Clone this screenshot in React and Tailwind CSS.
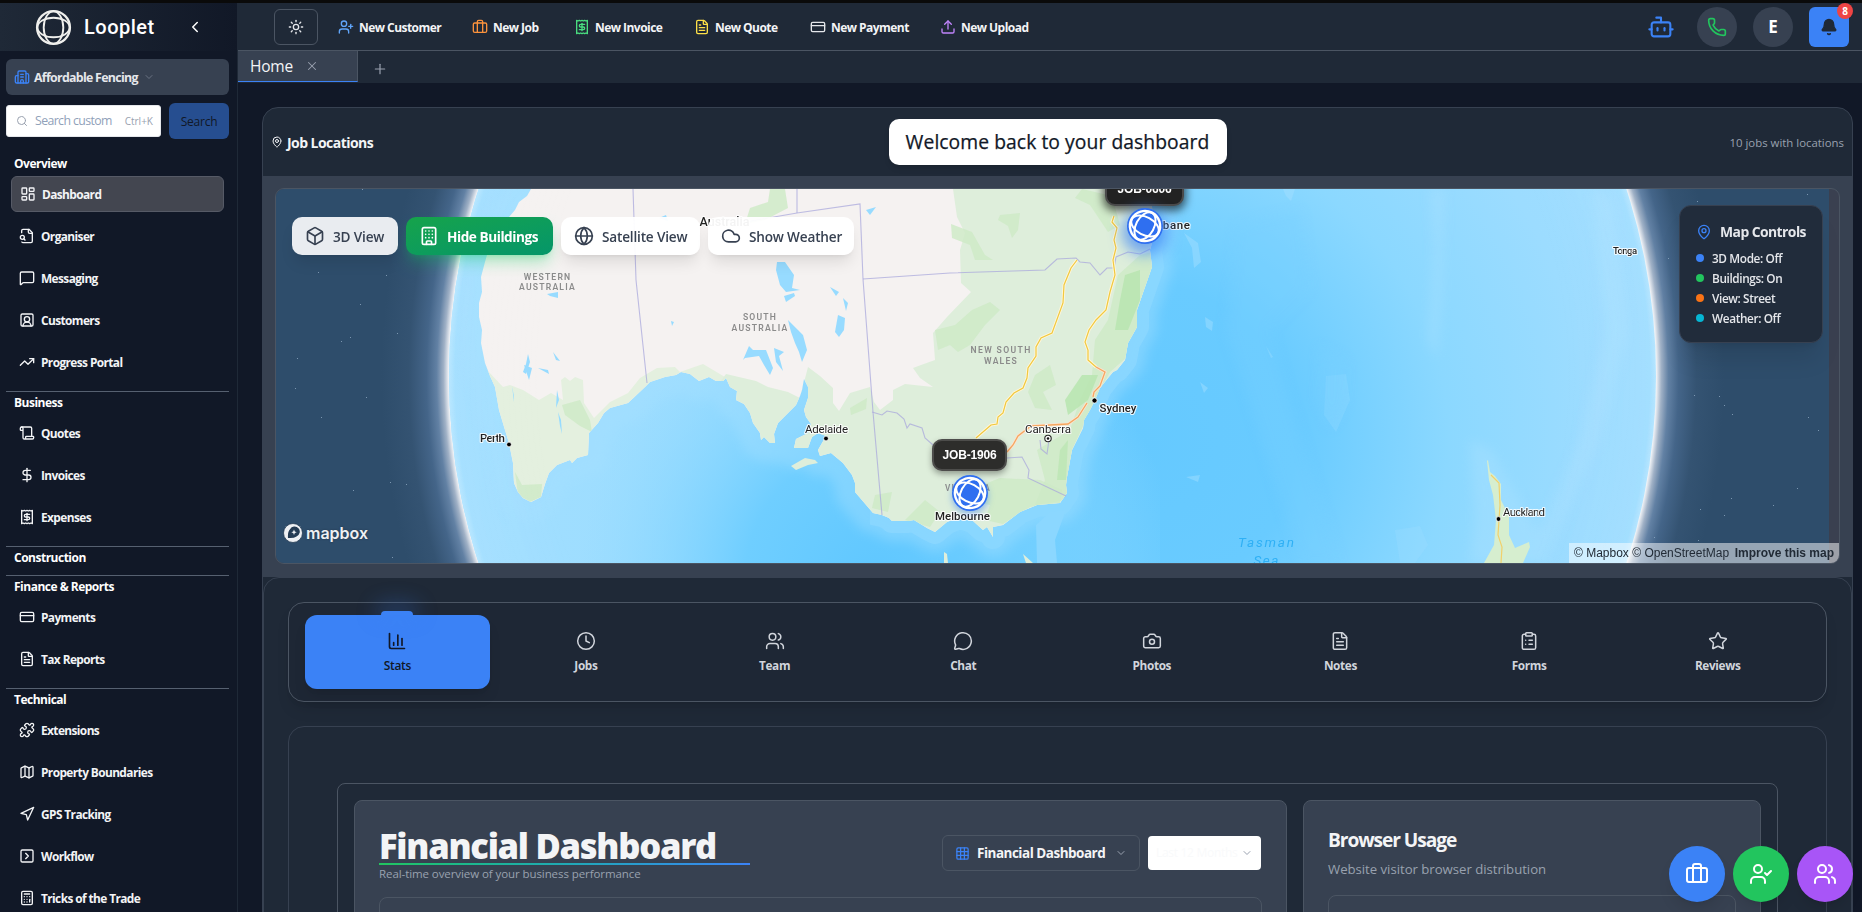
import React from "react";
import {
  LayoutDashboard, MessageSquare, SquareUserRound, TrendingUp, Scroll, DollarSign, Receipt,
  CreditCard, FileText, Puzzle, Map, Navigation, SquareChevronRight, Calculator, Sun, UserPlus, Briefcase,
  Upload, Bot, Phone, Bell, Building2, Building, MapPin, Box, Globe, Cloud, Clock, Users, MessageCircle,
  Camera, ClipboardList, Star, UserCheck, Grid3x3, ChevronLeft, ChevronDown, Search, X, Plus, ChartColumn,
} from "lucide-react";

function LoopMark({ className, stroke = 2.4 }) {
  return (
    <svg viewBox="0 0 40 40" className={className} fill="none" stroke="currentColor" strokeWidth={stroke}>
      <circle cx="20" cy="20" r="17.8" />
      <ellipse cx="20" cy="20" rx="17.4" ry="10.6" strokeWidth={stroke * 0.85} />
      <ellipse cx="20" cy="20" rx="10.6" ry="17.4" strokeWidth={stroke * 0.85} />
    </svg>
  );
}

function FileLookup({ className }) {
  return (
    <svg viewBox="0 0 24 24" className={className} fill="none" stroke="currentColor" strokeWidth="2" strokeLinecap="round" strokeLinejoin="round">
      <path d="M14 2v4a2 2 0 0 0 2 2h4" />
      <path d="M4.268 21a2 2 0 0 0 1.727 1H18a2 2 0 0 0 2-2V7l-5-5H6a2 2 0 0 0-2 2v3" />
      <path d="m9 18-1.500-1.500" />
      <circle cx="5" cy="14" r="3" />
    </svg>
  );
}

const sections = [
  {
    title: "Overview",
    items: [
      [LayoutDashboard, "Dashboard"],
      [FileLookup, "Organiser"],
      [MessageSquare, "Messaging"],
      [SquareUserRound, "Customers"],
      [TrendingUp, "Progress Portal"],
    ],
  },
  { title: "Business", items: [[Scroll, "Quotes"], [DollarSign, "Invoices"], [Receipt, "Expenses"]] },
  { title: "Construction", items: [] },
  { title: "Finance & Reports", items: [[CreditCard, "Payments"], [FileText, "Tax Reports"]] },
  {
    title: "Technical",
    items: [
      [Puzzle, "Extensions"],
      [Map, "Property Boundaries"],
      [Navigation, "GPS Tracking"],
      [SquareChevronRight, "Workflow"],
      [Calculator, "Tricks of the Trade"],
    ],
  },
];

function Sidebar() {
  return (
    <aside className="flex w-[238px] shrink-0 flex-col overflow-hidden border-r border-[#1f2937] bg-[#111827]">
      <div className="flex h-12 shrink-0 items-center bg-gradient-to-r from-[#1f2937] to-[#111827] pl-[35px] text-white">
        <LoopMark className="size-[37px] text-[#efefec]" />
        <span className="ml-[12px] w-[72px] font-['Roboto',sans-serif] text-[20px] font-medium tracking-[0.5px]">Looplet</span>
        <ChevronLeft className="ml-[30px] size-[18px]" />
      </div>
      <div className="mx-[6px] mt-2 flex h-9 w-[223px] shrink-0 items-center rounded-md bg-[#374151] pl-2">
        <Building2 className="size-4 text-[#3b82f6]" />
        <span className="ml-1 pt-[2px] text-[12.400px] font-bold tracking-[-0.710px] text-gray-200">Affordable Fencing</span>
        <ChevronDown className="ml-[5px] size-[12px] text-gray-500" />
      </div>
      <div className="mx-[6px] mt-2 flex h-9 w-[223px] shrink-0 items-center gap-2">
        <div className="flex h-8 w-[155px] items-center rounded-[3px] border border-gray-200 bg-white pl-[9px] pr-[7px]">
          <Search className="size-3 text-gray-400" />
          <span className="ml-[7px] flex-1 whitespace-nowrap pt-px text-[12.300px] tracking-[-0.600px] text-slate-400">Search custom</span>
          <span className="text-[10px] text-gray-400">Ctrl+K</span>
        </div>
        <div className="flex h-9 w-[60px] items-center justify-center rounded-md bg-[#264e90] pt-px text-[12px] tracking-[-0.250px] text-[#111827]">Search</div>
      </div>
      <nav className="mt-[13px] flex flex-col">
        {sections.map((s, i) => (
          <div key={s.title} className="flex flex-col">
            {i > 0 && <div className="ml-[6px] h-px w-[223px] shrink-0 bg-[#566070]" />}
            <div className={"flex items-center pl-[14px] text-[12px] font-bold tracking-[-0.500px] text-white " + (i === 0 ? "h-6" : s.items.length ? "h-[23px] pb-px" : "mb-[5px] h-[23px] pb-px")}>{s.title}</div>
            {s.items.length > 0 && (
              <div className="mb-[11px] ml-[11px] flex w-[213px] flex-col gap-[6px]">
                {s.items.map(([Icon, label], j) => (
                  <div
                    key={label}
                    className={
                      "flex h-9 items-center gap-[6px] rounded-md border pl-2 text-[11.900px] font-bold tracking-[-0.600px] text-gray-100 " +
                      (i === 0 && j === 0 ? "border-[#565a66] bg-[#434650]" : "-ml-px border-transparent")
                    }
                  >
                    <Icon className="size-4" strokeWidth={2} />
                    <span className="whitespace-nowrap pt-[2px]">{label}</span>
                  </div>
                ))}
              </div>
            )}
          </div>
        ))}
      </nav>
    </aside>
  );
}

function TopBar() {
  const actions = [
    [UserPlus, "New Customer", "text-[#60a5fa]", "w-[134px]"],
    [Briefcase, "New Job", "text-[#fb923c]", "w-[102px]"],
    [Receipt, "New Invoice", "text-[#4ade80]", "w-[120px]"],
    [FileText, "New Quote", "text-[#fde047]", "w-[116px]"],
    [CreditCard, "New Payment", "text-gray-200", "w-[130px]"],
    [Upload, "New Upload", "text-[#c084fc]", "w-[120px]"],
  ];
  return (
    <header className="flex h-12 shrink-0 items-center border-b border-[#4b5563] bg-[#1f2937] pr-[13px] pt-px">
      <div className="ml-9 flex h-9 w-11 items-center justify-center rounded-md border border-[#4b5563]">
        <Sun className="size-4 text-gray-200" />
      </div>
      <div className="ml-5 flex flex-1">
        {actions.map(([Icon, label, color, width]) => (
          <div key={label} className={"flex items-center gap-[5px] " + width}>
            <Icon className={"size-4 " + color} />
            <span className="whitespace-nowrap pt-px text-[12px] font-bold tracking-[-0.540px] text-gray-100">{label}</span>
          </div>
        ))}
      </div>
      <Bot className="size-7 text-[#3b82f6]" strokeWidth={1.8} />
      <div className="ml-[22px] flex size-10 items-center justify-center rounded-full bg-[#374151]">
        <Phone className="size-5 text-[#22c55e]" />
      </div>
      <div className="ml-4 flex size-10 items-center justify-center rounded-full bg-[#374151] text-[17px] font-bold text-white">E</div>
      <div className="relative ml-4 flex size-10 items-center justify-center rounded-md bg-[#3b82f6]">
        <Bell className="size-[18px] text-[#1f2937]" fill="currentColor" />
        <span className="absolute -right-1 -top-1 flex size-4 items-center justify-center rounded-full bg-[#ef4444] text-[10px] font-bold text-white">8</span>
      </div>
    </header>
  );
}

function TabStrip() {
  return (
    <div className="flex h-8 shrink-0 items-start bg-[#1f2937]">
      <div className="flex h-[31px] w-[120px] items-center border-b border-r border-b-[#3b82f6] border-r-[#4b5563] bg-[#374151] pl-3">
        <span className="pt-px text-[15.500px] tracking-[-0.200px] text-gray-100">Home</span>
        <X className="ml-[12px] size-[14px] text-gray-400" strokeWidth={1.8} />
      </div>
      <Plus className="ml-[14px] mt-[10px] size-4 text-gray-400" strokeWidth={1.8} />
    </div>
  );
}

const land =
  "M531 189 L527 196 L519 202 L515 210 L509 217 L500 233 L489 248 L485 262 L481 277 L482 292 L479 303 L479 317 L482 330 L481 343 L485 363 L490 376 L495 387 L499 410 L505 430 L509 443 L513 463 L514 483 L518 492 L523 498 L531 502 L541 497 L545 484 L549 473 L557 465 L570 460 L572 463 L577 458 L588 455 L589 433 L598 423 L604 413 L610 408 L628 403 L645 387 L650 382 L665 377 L676 375 L681 372 L690 374 L699 381 L709 377 L716 381 L723 381 L726 378 L730 387 L737 391 L736 400 L744 404 L750 413 L753 423 L760 433 L761 440 L764 437 L770 443 L775 443 L774 434 L778 423 L790 411 L796 405 L800 396 L802 390 L804 379 L808 387 L808 398 L804 410 L806 417 L811 424 L808 433 L796 439 L794 448 L808 448 L812 437 L818 433 L826 436 L818 450 L820 456 L831 453 L843 463 L852 475 L855 483 L855 492 L873 513 L882 515 L889 518 L892 521 L908 521 L914 520 L927 528 L935 532 L947 522 L960 517 L973 521 L983 530 L987 527 L993 537 L993 527 L1003 525 L1020 512 L1037 505 L1060 503 L1067 493 L1066 485 L1067 477 L1072 450 L1083 428 L1084 420 L1090 410 L1095 400 L1100 388 L1108 378 L1113 372 L1117 370 L1125 360 L1128 343 L1137 327 L1137 310 L1145 287 L1152 267 L1150 250 L1155 233 L1152 207 L1150 189 Z";
const eastGreen =
  "M953 189 L957 217 L965 233 L960 250 L961 283 L971 292 L947 317 L933 333 L935 360 L921 365 L913 368 L920 378 L933 387 L905 384 L893 390 L893 400 L880 410 L874 402 L870 387 L850 393 L839 411 L833 403 L833 388 L820 376 L808 367 L800 398 L788 392 L768 387 L756 381 L726 374 L720 382 L734 400 L755 440 L770 450 L790 450 L850 500 L880 530 L1000 545 L1080 510 L1170 260 L1160 180 Z";
const wildGreen = "M481 353 L487 370 L503 387 L510 385 L523 390 L539 400 L551 393 L563 400 L561 380 L565 377 L570 381 L575 377 L583 380 L584 403 L594 418 L610 402 L628 393 L640 378 L657 368 L675 367 L680 372 L703 364 L725 377 L726 390 L680 380 L640 395 L590 460 L530 510 L500 480 L475 360Z";

const forests = [
  "M1118 275 L1140 255 L1160 250 L1150 290 L1135 350 L1110 372 L1095 400 L1072 450 L1066 500 L1035 505 L1045 480 L1037 450 L1070 430 L1080 400 L1092 375 L1095 340 L1108 320Z",
  "M1000 215 L1020 213 L1018 230 L1012 238 L1008 226 L998 220Z",
  "M972 310 L990 302 L1000 310 L985 325 L970 345 L958 352 L950 345 L938 350 L935 330 L955 325Z",
  "M951 224 L972 232 L985 255 L993 260 L975 260 L970 245 L952 238Z",
  "M970 490 L1000 478 L1040 480 L1062 490 L1060 503 L1030 507 L1003 524 L985 520 L990 505 L975 502Z",
  "M1035 375 L1050 365 L1056 385 L1043 392 L1052 410 L1035 408 L1028 392Z",
  "M905 520 L925 500 L940 512 L930 527Z",
  "M850 408 L867 398 L866 409 L851 415Z",
  "M875 495 L892 492 L888 512 L872 508Z",
  "M515 472 L522 485 L542 484 L541 497 L530 502 L518 495Z",
  "M562 405 L580 400 L590 420 L592 432 L580 426 L565 415Z",
  "M770 189 L785 189 L788 208 L765 220 L745 224 L750 208 L768 202Z",
  "M1082 189 L1112 196 L1120 225 L1108 232 L1090 205 L1075 198Z",
];

const lakes = [
  "M777 262 L785 262 L794 275 L792 288 L800 290 L786 292 L780 285 L776 270Z",
  "M784 296 L794 293 L795 296 L786 302Z",
  "M788 320 L798 330 L803 335 L807 350 L802 362 L799 352 L795 343 L791 332Z",
  "M749 346 L753 350 L766 350 L773 368 L770 375 L764 365 L759 356 L745 358 L743 360Z",
  "M774 348 L784 352 L779 356 L783 371 L776 362Z",
  "M838 315 L845 318 L844 330 L839 337 L835 332Z",
  "M843 298 L848 303 L846 311Z",
  "M830 287 L839 292 L836 296Z",
  "M866 210 L876 207 L870 215Z",
  "M659 218 L666 215 L668 221Z",
  "M671 321 L674 322 L672 326Z",
  "M547 294 L558 292 L558 298 L550 296Z",
  "M553 352 L560 361 L556 360Z",
  "M524 365 L532 368 L529 380Z",
  "M523 372 L526 364 L528 354 L530 362 L526 374Z",
  "M538 368 L548 370 L549 374Z",
  "M557 390 L559 400 L556 408Z",
  "M558 412 L561 420 L562 434 L560 426Z",
  "M512 386 L514 396 L514 402Z",
];

const roads = [
  "M1077 260 L1071 268 L1064 285 L1063 303 L1052 333 L1041 338 L1036 347 L1036 356 L1028 368 L1027 378 L1023 388 L1014 393 L1006 402 L1003 413 L998 417 L997 424 L991 425 L976 438",
  "M1114 216 L1112 222 L1117 228 L1114 240 L1116 248 L1113 260 L1115 275 L1110 292 L1106 310 L1096 320 L1089 330 L1085 342 L1088 350 L1088 360 L1096 367",
];
const hotRoads = ["M1096 367 L1105 372 L1100 386 L1094 392 L1093 397", "M1087 403 L1078 417 L1068 424 L1050 425 L1031 426 L1018 436 L1013 445 L1007 452"];
const borders = [
  "M633 189 L636 280 L647 383",
  "M797 189 L797 213",
  "M745 222 L797 213 L860 204 L863 279 L873 412 L882 515",
  "M863 279 L950 273 L1045 270 L1057 259 L1076 258 L1080 262 L1090 263 L1100 275 L1107 268 L1114 268 L1116 257 L1128 252 L1140 254 L1150 249",
  "M872 412 L882 415 L887 411 L897 413 L904 419 L907 428 L910 424 L922 428 L925 438 L933 445",
  "M1007 458 L1022 457 L1029 470 L1028 478 L1066 496",
  "M1040 440 L1041 449 L1047 454 L1049 440",
];
const northIsland = "M1488 460 L1490 472 L1495 476 L1501 484 L1501 500 L1506 510 L1509 516 L1509 535 L1515 548 L1529 542 L1530 547 L1523 563 L1484 563 L1494 545 L1496 520 L1493 495 L1489 480 L1487 461Z";
const stars = [
  [362, 189], [385, 249], [318, 272], [297, 358], [350, 337], [360, 304], [397, 333], [341, 341],
  [366, 397], [321, 417], [295, 388], [390, 482], [406, 484], [392, 557], [353, 490], [386, 275],
  [1697, 201], [1807, 194], [1668, 258], [1719, 396], [1694, 395], [1732, 414], [1724, 405],
  [1808, 417], [1797, 488], [1731, 498], [1700, 509], [1724, 515], [1698, 540], [1718, 552], [1818, 430], [1773, 505], [1654, 537],
];

function MapArt() {
  const halo = { paintOrder: "stroke", stroke: "rgba(255,255,255,0.85)", strokeWidth: 2.2, strokeLinejoin: "round" };
  return (
    <svg viewBox="276 189 1553 374" className="h-[374px] w-[1553px] shrink-0 font-['Roboto',sans-serif]">
      <defs>
        <radialGradient id="air" gradientUnits="userSpaceOnUse" cx="1052.5" cy="376" r="685">
          <stop offset="0.880" stopColor="#ffffff" />
          <stop offset="0.883" stopColor="#e0e5ec" />
          <stop offset="0.889" stopColor="#a0b1c6" />
          <stop offset="0.899" stopColor="#6281a4" />
          <stop offset="0.914" stopColor="#446589" />
          <stop offset="0.940" stopColor="#345372" />
          <stop offset="0.980" stopColor="#2e4d6b" />
        </radialGradient>
        <radialGradient id="sea" gradientUnits="userSpaceOnUse" cx="1140" cy="440" r="560">
          <stop offset="0" stopColor="#65c9ff" />
          <stop offset="0.280" stopColor="#69cbff" />
          <stop offset="0.550" stopColor="#8bd8ff" />
          <stop offset="0.800" stopColor="#9cdcff" />
          <stop offset="1" stopColor="#a0deff" />
        </radialGradient>
        <radialGradient id="bight" gradientUnits="userSpaceOnUse" cx="880" cy="800" r="300" gradientTransform="translate(0 -220)">
          <stop offset="0" stopColor="#5fc7ff" />
          <stop offset="0.450" stopColor="#6fceff" />
          <stop offset="1" stopColor="#8fd9ff" stopOpacity="0" />
        </radialGradient>
        <radialGradient id="rim" gradientUnits="userSpaceOnUse" cx="1052.5" cy="376" r="603.5">
          <stop offset="0.85" stopColor="#ffffff" stopOpacity="0" />
          <stop offset="0.990" stopColor="#ffffff" stopOpacity="0.060" />
          <stop offset="1" stopColor="#ffffff" stopOpacity="0.250" />
        </radialGradient>
        <linearGradient id="west" x1="440" x2="1000" gradientUnits="userSpaceOnUse">
          <stop offset="0" stopColor="#a2dfff" />
          <stop offset="0.500" stopColor="#9bdcff" stopOpacity="0.900" />
          <stop offset="1" stopColor="#8bd7ff" stopOpacity="0" />
        </linearGradient>
        <clipPath id="globe"><circle cx="1052.5" cy="376" r="603.5" /></clipPath>
        <clipPath id="landClip"><path d={land} /></clipPath>
        <clipPath id="eastClip"><rect x="870" y="180" width="400" height="390" /></clipPath>
        <filter id="soft" x="-20%" y="-20%" width="140%" height="140%"><feGaussianBlur stdDeviation="6" /></filter>
      </defs>
      <rect x="276" y="189" width="1553" height="374" fill="#2e4d6b" />
      <circle cx="1052.5" cy="376" r="685" fill="url(#air)" />
      {stars.map(([x, y]) => (
        <rect key={x + "-" + y} x={x} y={y} width="1" height="1" fill="#8fa9c2" opacity="0.800" />
      ))}
      <g clipPath="url(#globe)">
        <rect x="440" y="180" width="1230" height="390" fill="url(#sea)" />
        <rect x="440" y="180" width="620" height="390" fill="url(#west)" />
        <rect x="540" y="180" width="620" height="390" fill="url(#bight)" />
        <path d={land} fill="none" stroke="#a6e0ff" strokeWidth="40" strokeLinejoin="round" filter="url(#soft)" opacity="0.400" />
        <path d={land} fill="none" stroke="#8bd7ff" strokeWidth="24" strokeLinejoin="round" opacity="0.850" clipPath="url(#eastClip)" />
        <path d="M1037 563 L1036 525 L1050 512 L1066 510 L1055 540 L1057 563Z" fill="#8bd7ff" />
        <g filter="url(#soft)" fill="#b4e4ff" opacity="0.300">
          <path d="M1430 189 L1445 189 L1442 300 L1437 360 L1428 340 L1434 250Z" />
          <path d="M1592 189 L1612 200 L1628 330 L1600 440 L1545 563 L1525 563 L1580 440 L1605 330Z" />
          <path d="M1470 440 L1492 450 L1525 510 L1550 545 L1530 563 L1470 563 L1475 520Z" />
        </g>
        <g fill="#a6e0ff" opacity="0.450">
          <path d="M1283 189 L1295 189 L1291 201 L1286 196Z" />
          <path d="M1184 233 L1198 243 L1201 262 L1194 268 L1192 248Z" />
          <path d="M1205 317 L1213 322 L1212 331 L1206 327Z" />
          <path d="M1266 346 L1273 357 L1271 358Z" />
          <path d="M1200 382 L1208 388 L1204 393Z" />
          <path d="M1186 477 L1200 475 L1198 482Z" />
          <path d="M1326 376 L1346 374 L1350 400 L1336 432 L1324 415Z" opacity="0.500" />
          <path d="M1395 530 L1420 526 L1428 545 L1415 563 L1400 563Z" opacity="0.500" />
        </g>
        <g fill="#78d0ff" opacity="0.350" filter="url(#soft)">
          <path d="M1236 225 L1300 210 L1310 290 L1270 330 L1290 400 L1340 563 L1300 563 L1255 420 L1226 330Z" />
          <path d="M1320 345 L1346 360 L1345 405 L1330 430 L1318 400Z" />
        </g>
        <path d={land} fill="#f5f2f1" />
        <g clipPath="url(#landClip)">
          <path d={wildGreen} fill="#e4f0df" />
          <path d={eastGreen} fill="#deeedb" />
          {forests.map((d) => <path key={d} d={d} fill="#cdeac6" opacity="0.800" />)}
          <path d="M1125 275 L1140 270 L1140 300 L1128 330 L1115 330 L1120 300Z" fill="#b9e5b1" opacity="0.900" />
          <path d="M1065 400 L1082 375 L1098 375 L1088 400 L1068 415Z" fill="#b9e5b1" opacity="0.900" />
          <path d="M1060 450 L1068 440 L1066 480 L1057 480Z" fill="#b9e5b1" opacity="0.700" />
        </g>
        {lakes.map((d) => <path key={d} d={d} fill="#97dbff" />)}
        <path d="M791 466 L805 458 L815 460 L818 463 L808 465 L796 470Z" fill="#deeedb" />
        <path d="M944 552 L947 554 L948 563 L944 563Z M1023 554 L1033 563 L1026 563Z" fill="#deeedb" />
        <path d={northIsland} fill="#d6eecf" />
        <path d="M1491 475 L1499 483 L1500 505 L1498 535 L1502 547 L1501 563" fill="none" stroke="#f2d06b" strokeWidth="1.200" />
        {borders.map((d) => <path key={d} d={d} fill="none" stroke="#a9a8dc" strokeWidth="1.100" opacity="0.750" />)}
        {roads.map((d) => <path key={d} d={d} fill="none" stroke="#fff6da" strokeWidth="3" />)}
        {roads.map((d) => <path key={d + "r"} d={d} fill="none" stroke="#f0c93f" strokeWidth="1.200" />)}
        {hotRoads.map((d) => <path key={d} d={d} fill="none" stroke="#fbe3d0" strokeWidth="3" />)}
        {hotRoads.map((d) => <path key={d + "r"} d={d} fill="none" stroke="#f5a860" strokeWidth="1.300" />)}
        <rect x="440" y="180" width="1230" height="390" fill="url(#rim)" />
        <g fontSize="8.600" fontWeight="600" fill="#8b8b8b" textAnchor="middle" letterSpacing="1.200">
          <text x="547.500" y="280">WESTERN</text>
          <text x="547.500" y="290">AUSTRALIA</text>
          <text x="760" y="320">SOUTH</text>
          <text x="760" y="330.500">AUSTRALIA</text>
          <text x="1001" y="352.500" textLength="61">NEW SOUTH</text>
          <text x="1001" y="363.500">WALES</text>
          <text x="968" y="491" textLength="46" fontSize="8.200">VICTORIA</text>
        </g>
        <g fontSize="11.500" fill="#222" style={halo}>
          <text x="480" y="441.500" textLength="25" fontWeight="500">Perth</text>
          <text x="805" y="433" textLength="43">Adelaide</text>
          <text x="1025" y="432.500" textLength="46">Canberra</text>
          <text x="1099.500" y="412" textLength="37" fontWeight="500">Sydney</text>
          <text x="935" y="519.500" textLength="55" fontWeight="500">Melbourne</text>
          <text x="1140" y="229" textLength="50" fontWeight="500">Brisbane</text>
          <text x="1503" y="516" textLength="42">Auckland</text>
          <text x="1613" y="253.500" fontSize="9.500" textLength="24" fontWeight="500">Tonga</text>
          <text x="699.500" y="225.500" fontSize="12.500" fontWeight="500" textLength="50">Australia</text>
        </g>
        <g fontSize="13.500" fill="#2fb0f5" fontStyle="italic" textAnchor="middle">
          <text x="1266" y="547" textLength="56">Tasman</text>
          <text x="1266" y="564.500" textLength="25">Sea</text>
        </g>
        <g fill="#000" stroke="#fff" strokeWidth="0.800">
          <circle cx="509" cy="444.500" r="2.400" />
          <circle cx="826" cy="438.500" r="2.400" />
          <circle cx="1094.500" cy="400.500" r="2.600" />
          <circle cx="1498.500" cy="519" r="2.400" />
        </g>
        <circle cx="1048" cy="438.500" r="3.200" fill="#fff" stroke="#222" strokeWidth="1.100" />
        <circle cx="1048" cy="438.500" r="1.300" fill="#111" />
      </g>
    </svg>
  );
}

function MapCard() {
  const btn = "flex h-[38px] items-center gap-[8px] whitespace-nowrap rounded-[10px] pl-[13px] shadow-lg ";
  const label = "pt-[2px] text-[13.600px] font-semibold tracking-[-0.180px]";
  return (
    <div className="bg-[#374151] px-3 pb-[13px] pt-3">
      <div className="relative flex h-[376px] w-[1565px] overflow-hidden rounded-[9px] border border-[#4b5563] bg-[#3a4050]">
        <MapArt />
        <div className="absolute left-4 top-7 flex items-center gap-2">
          <div className={btn + "w-[106px] bg-[#e9ecf0] text-[#374151]"}><Box className="size-5" /><span className={label}>3D View</span></div>
          <div className={btn + "w-[147px] bg-gradient-to-br from-[#16a34a] to-[#059669] text-white shadow-green-500/30"}><Building className="size-5" /><span className="pt-[2px] text-[13.600px] font-bold tracking-[-0.440px]">Hide Buildings</span></div>
          <div className={btn + "w-[139px] bg-white/95 text-[#374151]"}><Globe className="size-5" /><span className={label}>Satellite View</span></div>
          <div className={btn + "w-[146px] bg-white/95 text-[#374151]"}><Cloud className="size-5" /><span className={label}>Show Weather</span></div>
        </div>
        <div className="absolute right-[16px] top-4 flex h-[138px] w-[144px] flex-col rounded-xl border border-[#374151] bg-[#212c3b] pl-4 pt-[16px] text-gray-200 shadow-xl">
          <div className="flex h-5 items-center gap-2">
            <MapPin className="size-4 text-[#3b82f6]" />
            <span className="whitespace-nowrap pt-px text-[13.900px] font-bold tracking-[-0.550px]">Map Controls</span>
          </div>
          <div className="mt-[6px] flex flex-col text-[11.800px] font-semibold">
            {[["3D Mode: Off", "bg-[#3b82f6]"], ["Buildings: On", "bg-[#22c55e]"], ["View: Street", "bg-[#f97316]"], ["Weather: Off", "bg-[#06b6d4]"]].map(([t, c]) => (
              <div key={t} className="flex h-5 items-center gap-2 tracking-[-0.380px]">
                <span className={"size-2 rounded-full " + c} />
                <span className="pt-px">{t}</span>
              </div>
            ))}
          </div>
        </div>
        <div className="absolute left-[829px] top-[-17px] flex h-[34px] w-[79px] items-center justify-center rounded-[10px] border-2 border-[#4a4a4a] bg-[#222] font-['Liberation_Sans',sans-serif] text-[12px] font-bold tracking-[-0.200px] text-white shadow-[0_3px_8px_2px_rgba(0,0,0,0.6)]">JOB-0606</div>
        <div className="absolute left-[851px] top-[19px] flex size-9 items-center justify-center rounded-full bg-[#2f6ff0] shadow-[0_6px_14px_5px_rgba(59,130,246,0.65)]">
          <LoopMark className="size-[34px] rotate-[28deg] text-white" stroke={2.8} />
        </div>
        <div className="absolute left-[656px] top-[250px] flex h-8 w-[75px] items-center justify-center rounded-[10px] border-2 border-[#4d4d4b] bg-[#2d2d2b] font-['Liberation_Sans',sans-serif] text-[12px] font-bold tracking-[-0.200px] text-white shadow-[0_3px_6px_rgba(0,0,0,0.35)]">JOB-1906</div>
        <div className="absolute left-[676px] top-[286px] flex size-9 items-center justify-center rounded-full bg-[#2f6ff0] shadow-[0_3px_6px_rgba(59,130,246,0.5)]">
          <LoopMark className="size-[34px] rotate-[28deg] text-white" stroke={2.8} />
        </div>
        <div className="absolute bottom-5 left-[7px] flex items-center gap-[3px]">
          <svg viewBox="0 0 20 20" className="size-5">
            <circle cx="10" cy="10" r="9.500" fill="#eef0f3" stroke="#243b53" strokeWidth="0.800" />
            <path d="M5 15 Q4.500 8.500 7 6.200 A5.200 5.200 0 1 1 13.500 13.500 Q11 15.500 5 15Z" fill="#243b53" />
            <path d="M11 6.500 L11.800 8.400 L13.700 9.200 L11.800 10 L11 11.900 L10.200 10 L8.300 9.200 L10.200 8.400Z" fill="#eef0f3" />
          </svg>
          <span className="font-['Inter',sans-serif] text-[16px] font-semibold leading-5 text-[#eef0f3] [text-shadow:0_0_2px_#1f3347]">mapbox</span>
        </div>
        <div className="absolute bottom-0 right-0 flex h-5 w-[270px] items-center justify-between whitespace-nowrap bg-white/50 px-[5px] font-['Liberation_Sans',sans-serif] text-[12px] text-[#222b36]">
          <span>© Mapbox © OpenStreetMap</span>
          <b>Improve this map</b>
        </div>
      </div>
    </div>
  );
}

function StatTabs() {
  const tabs = [[ChartColumn, "Stats"], [Clock, "Jobs"], [Users, "Team"], [MessageCircle, "Chat"], [Camera, "Photos"], [FileText, "Notes"], [ClipboardList, "Forms"], [Star, "Reviews"]];
  return (
    <div className="grid h-[100px] grid-cols-8 gap-1 rounded-2xl border border-[#4b5563] bg-[#1e2735] px-4 py-3 shadow-lg">
      {tabs.map(([Icon, label], i) => (
        <div
          key={label}
          className={"relative flex h-[74px] flex-col items-center justify-center gap-[6px] rounded-xl tracking-[-0.350px] " + (i === 0 ? "bg-[#3b82f6] text-[12px] font-semibold text-[#111827] shadow-lg" : "text-[11.800px] font-bold text-gray-300")}
        >
          {i === 0 && <span className="absolute -top-1 left-[76px] h-1 w-8 rounded-t-sm bg-[#3b82f6] shadow-[0_-3px_20px_6px_rgba(59,130,246,0.25)]" />}
          <Icon className="size-5" strokeWidth={i === 0 ? 2 : 1.800} />
          <span className="leading-[17px]">{label}</span>
        </div>
      ))}
    </div>
  );
}

function Finance() {
  return (
    <div className="mt-6 flex h-[300px] flex-col rounded-2xl border border-[#374151] px-12 pt-14">
      <div className="flex h-[300px] shrink-0 gap-4 rounded-lg border border-[#4b5563] p-4">
        <div className="w-[933px] rounded-lg border border-[#4b5563] bg-[#374151] px-6 pt-[28px]">
          <div className="flex h-[56px] justify-between">
            <div className="w-[371px]">
              <h1 className="h-[34px] whitespace-nowrap text-[34.500px] font-extrabold leading-[34px] tracking-[-1.250px] text-gray-100">Financial Dashboard</h1>
              <div className="h-[2px] w-full bg-gradient-to-r from-[#22c55e] to-[#3b82f6]" />
              <p className="text-[11.500px] leading-[18px] tracking-[-0.080px] text-gray-400">Real-time overview of your business performance</p>
            </div>
            <div className="mr-px mt-[6px] flex h-9 items-center gap-2">
              <div className="flex h-9 w-[198px] items-center rounded-md border border-[#4b5563] pl-[12px]">
                <Grid3x3 className="size-[15px] text-[#3b82f6]" />
                <span className="ml-[7px] flex-1 whitespace-nowrap pt-px text-[13.500px] font-bold tracking-[-0.500px] text-gray-100">Financial Dashboard</span>
                <ChevronDown className="mr-[12px] size-[12px] text-gray-400" />
              </div>
              <div className="flex h-[34px] w-[113px] items-center justify-between rounded bg-white pl-2 pr-[8px]">
                <span className="whitespace-nowrap text-[12px] tracking-[-0.300px] text-gray-50">Last 12 Months</span>
                <ChevronDown className="size-[12px] text-gray-400" />
              </div>
            </div>
          </div>
          <div className="mt-[12px] h-[100px] rounded-lg border border-[#4b5563]" />
        </div>
        <div className="flex-1 rounded-lg border border-[#4b5563] bg-[#374151] px-6 pt-[24px]">
          <h2 className="mt-[3px] text-[19.200px] font-bold leading-6 tracking-[-1.080px] text-gray-100">Browser Usage</h2>
          <p className="mt-[7px] text-[13.200px] leading-5 tracking-[-0.030px] text-gray-400">Website visitor browser distribution</p>
          <div className="mt-[16px] h-[100px] rounded-lg border border-[#4b5563]" />
        </div>
      </div>
    </div>
  );
}

export default function App() {
  return (
    <div className="flex h-[912px] w-full flex-col overflow-hidden bg-[#111827] font-['Open_Sans','Noto_Sans',sans-serif]">
      <div className="h-[3px] shrink-0 bg-[#0a0a0a]" />
      <div className="flex min-h-0 flex-1">
        <Sidebar />
        <div className="flex min-w-0 flex-1 flex-col">
          <TopBar />
          <TabStrip />
          <main className="flex min-h-0 flex-1 flex-col overflow-hidden pl-6 pr-[9px] pt-6">
            <div className="flex h-[900px] shrink-0 flex-col overflow-hidden rounded-2xl border border-[#374151] bg-[#1f2937]">
              <div className="grid h-[68px] shrink-0 grid-cols-[1fr_auto_1fr] items-center pl-[8px] pr-2">
                <div className="flex items-center gap-1 text-gray-100">
                  <MapPin className="size-3" />
                  <span className="text-[14px] font-bold tracking-[-0.550px]">Job Locations</span>
                </div>
                <div className="flex h-[46px] w-[338px] items-center justify-center whitespace-nowrap rounded-[10px] bg-white pt-px text-[19.300px] font-medium tracking-[0.070px] text-[#111827] shadow-md [-webkit-text-stroke:0.25px_#111827]">
                  Welcome back to your dashboard
                </div>
                <span className="pt-px text-right text-[11.400px] text-gray-400">10 jobs with locations</span>
              </div>
              <MapCard />
              <div className="flex-1 rounded-t-2xl border border-[#374151] px-6 pt-6">
                <StatTabs />
                <Finance />
              </div>
            </div>
          </main>
        </div>
      </div>
      <div className="fixed bottom-[10px] right-[9px] flex gap-2 text-white">
        <div className="flex size-14 items-center justify-center rounded-full bg-[#3b82f6] shadow-lg"><Briefcase className="size-6" /></div>
        <div className="flex size-14 items-center justify-center rounded-full bg-[#22c55e] shadow-lg"><UserCheck className="size-6" /></div>
        <div className="flex size-14 items-center justify-center rounded-full bg-[#a855f7] shadow-lg"><Users className="size-6" /></div>
      </div>
    </div>
  );
}
